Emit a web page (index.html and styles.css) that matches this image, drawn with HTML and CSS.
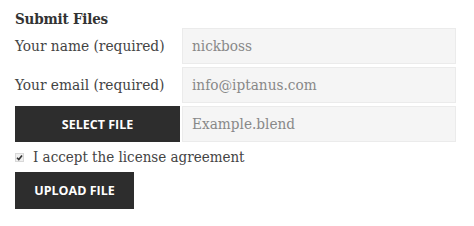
FILE: index.html
```html
<!DOCTYPE html>
<html lang="en">
<head>
    <meta charset="UTF-8">
    <meta name="viewport" content="width=device-width, initial-scale=1.0">
    <title>Submit Files</title>
    <link rel="stylesheet" href="styles.css">
</head>
<body>
    <form class="upload-form">
        <h3 class="form-title">Submit Files</h3>
        <div class="form-grid">
            <label class="field-label" for="name">Your name (required)</label>
            <input class="field-input" id="name" type="text" value="nickboss">
            <label class="field-label" for="email">Your email (required)</label>
            <input class="field-input" id="email" type="text" value="info@iptanus.com">
            <button class="btn btn-select" type="button">Select File</button>
            <input class="field-input" id="file" type="text" value="Example.blend">
        </div>
        <label class="accept">
            <span class="accept-box">
                <svg width="7" height="7" viewBox="0 0 7 7"><path d="M1 3.8 L2.8 5.6 L6 1.4" fill="none" stroke="#333" stroke-width="1.6"/></svg>
            </span>
            I accept the license agreement
        </label>
        <button class="btn btn-upload" type="button">Upload File</button>
    </form>
</body>
</html>
```

FILE: styles.css
```css
body {
    margin: 0;
    background-color: #ffffff;
    color: #444444;
    font-family: 'DejaVu Serif Condensed', 'DejaVu Serif', serif;
}
.upload-form {
    padding: 11px 15px;
}
.form-title {
    margin: 0;
    font-size: 15px;
    font-weight: bold;
    color: #333333;
    line-height: 17px;
    letter-spacing: -0.2px;
}
.form-grid {
    display: grid;
    grid-template-columns: 165px 274px;
    column-gap: 2px;
    row-gap: 3px;
    align-items: center;
}
.field-label {
    font-size: 15.3px;
    color: #444444;
}
.field-input {
    box-sizing: border-box;
    height: 36px;
    margin: 0;
    padding: 0 9px;
    border: 1px solid #ebebeb;
    background-color: #f5f5f5;
    font-family: 'DejaVu Serif Condensed', 'DejaVu Serif', serif;
    font-size: 15.2px;
    color: #888888;
    outline: none;
}
.btn {
    border: none;
    background-color: #2d2d2d;
    color: #ffffff;
    font-family: 'Open Sans', sans-serif;
    font-weight: bold;
    font-size: 12.5px;
    text-transform: uppercase;
    cursor: pointer;
}
.btn-select {
    height: 36px;
    width: 165px;
}
.accept {
    display: flex;
    align-items: center;
    gap: 9px;
    margin: 6px 0 6px 0;
    font-size: 15px;
    color: #444444;
}
.accept-box {
    box-sizing: border-box;
    width: 9px;
    height: 9px;
    border: 1px solid #d8d8d8;
    background-color: #f0f0f0;
    display: flex;
    align-items: center;
    justify-content: center;
}
.btn-upload {
    display: block;
    height: 37px;
    width: 119px;
}
```
